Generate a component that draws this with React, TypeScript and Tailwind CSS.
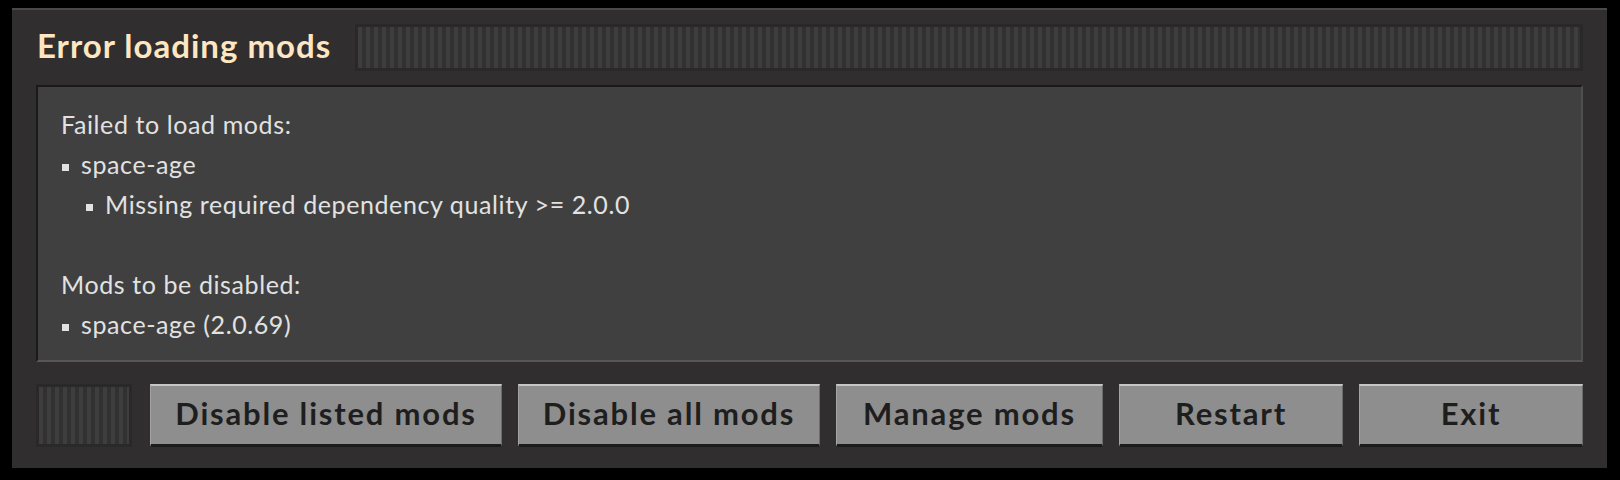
import React from "react";

const font = { fontFamily: '"Lato", "Open Sans", sans-serif' };

// vertical grille used as filler in title bar and button row
const Grille: React.FC<{ className?: string }> = ({ className }) => (
  <div className={`bg-[#2a2828] p-[3px] ${className ?? ""}`}>
    <div className="h-full w-full bg-[repeating-linear-gradient(90deg,#3f3e3e_0px,#3f3e3e_4px,#323131_4px,#323131_8px)]" />
  </div>
);

const Bullet: React.FC<{ children: React.ReactNode; indent?: boolean }> = ({ children, indent }) => (
  <div className={indent ? "pl-[25px]" : "pl-[1px]"}>
    <span className="inline-block w-[7px] h-[7px] bg-[#e2e2e2] align-middle mr-[12px]" />
    {children}
  </div>
);

const buttons = [
  { label: "Disable listed mods", w: "w-[352px]" },
  { label: "Disable all mods", w: "w-[302px]" },
  { label: "Manage mods", w: "w-[267px]" },
  { label: "Restart", w: "w-[224px]" },
  { label: "Exit", w: "w-[224px]" },
];

export default function App() {
  return (
    <div className="w-[1620px] h-[480px] bg-black pt-[8px] pl-[12px]" style={font}>
      <div className="w-[1595px] h-[460px] bg-[#302e2e] border-t-2 border-[#4a4848] px-[24px] pt-[14px] pb-[21px] flex flex-col">
        {/* title bar */}
        <div className="flex items-center h-[47px] gap-[24px]">
          <h1 className="text-[33px] font-bold leading-none tracking-[1px] text-[#ffe6c2] pl-[1px] -mt-[4px] whitespace-nowrap">
            Error loading mods
          </h1>
          <Grille className="flex-1 h-full" />
        </div>

        {/* message */}
        <div className="mt-[14px] h-[277px] bg-[#404040] border-t-2 border-l-2 border-[#1a1a1a] border-b-2 border-r-2 border-b-[#575757] border-r-[#4e4e4e] pl-[23px] pt-[17px] text-[25px] leading-[40px] tracking-[0.6px] text-[#e2e2e2]">
          <div>Failed to load mods:</div>
          <Bullet>space-age</Bullet>
          <Bullet indent>Missing required dependency quality &gt;= 2.0.0</Bullet>
          <div>&nbsp;</div>
          <div>Mods to be disabled:</div>
          <Bullet>space-age (2.0.69)</Bullet>
        </div>

        {/* buttons */}
        <div className="mt-[22px] h-[63px] flex gap-[16px]">
          <Grille className="flex-1 h-full mr-[2px]" />
          {buttons.map((b) => (
            <button
              key={b.label}
              className={`${b.w} h-full bg-[#8e8e8e] border-t-2 border-t-[#c6c6c6] border-l border-l-[#a4a4a4] border-r border-r-[#6c6c6c] border-b-[3px] border-b-[#1c1c1c] flex items-center justify-center text-[31px] font-bold tracking-[1.8px] text-[#1e1e1e] leading-none pb-[4px]`}
            >
              {b.label}
            </button>
          ))}
        </div>
      </div>
    </div>
  );
}
